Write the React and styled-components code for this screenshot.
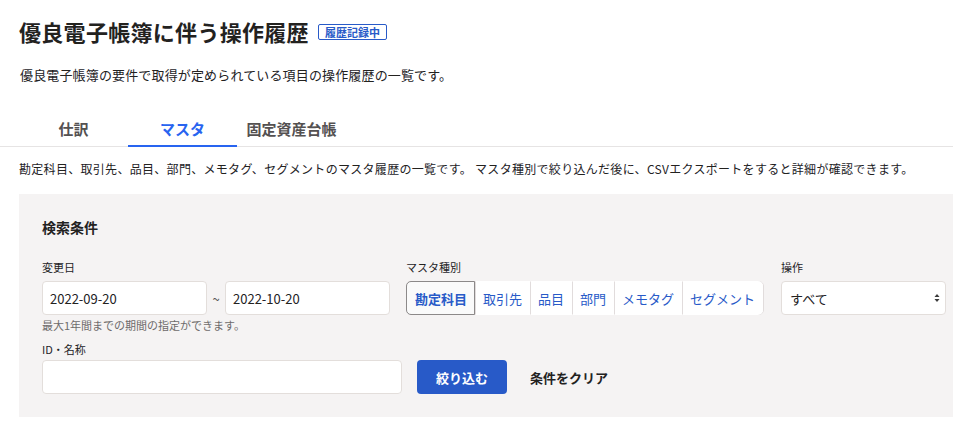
import React, { useState } from "react";
import styled, { createGlobalStyle } from "styled-components";

const colors = {
  text: "#23221f",
  sub: "#6e6b6b",
  blue: "#285ac8",
  tabBlue: "#2864f0",
  border: "#e1dcdc",
  panel: "#f5f3f3",
  line: "#e6e4e4",
};

const GlobalStyle = createGlobalStyle`
  html, body {
    margin: 0;
    padding: 0;
    background: #fff;
    color: ${colors.text};
    font-family: "Noto Sans CJK JP", "Noto Sans", "Liberation Sans", sans-serif;
  }
  * { box-sizing: border-box; }
`;

const masterTypes = ["勘定科目", "取引先", "品目", "部門", "メモタグ", "セグメント"];
const tabs = ["仕訳", "マスタ", "固定資産台帳"];

const App = () => {
  const [activeTab, setActiveTab] = useState(1);
  const [master, setMaster] = useState(0);

  return (
    <Page>
      <GlobalStyle />
      <Header>
        <TitleRow>
          <Title>優良電子帳簿に伴う操作履歴</Title>
          <Badge>履歴記録中</Badge>
        </TitleRow>
        <Lead>優良電子帳簿の要件で取得が定められている項目の操作履歴の一覧です。</Lead>
      </Header>

      <TabBar>
        {tabs.map((t, i) => (
          <Tab key={t} $active={i === activeTab} onClick={() => setActiveTab(i)}>
            {t}
          </Tab>
        ))}
      </TabBar>

      <SectionNote>
        勘定科目、取引先、品目、部門、メモタグ、セグメントのマスタ履歴の一覧です。 マスタ種別で絞り込んだ後に、CSVエクスポートをすると詳細が確認できます。
      </SectionNote>

      <Panel>
        <PanelTitle>検索条件</PanelTitle>
        <FieldRow>
          <Field>
            <Label>変更日</Label>
            <DateRange>
              <DateInput defaultValue="2022-09-20" />
              <Tilde>~</Tilde>
              <DateInput defaultValue="2022-10-20" />
            </DateRange>
            <Hint>最大1年間までの期間の指定ができます。</Hint>
          </Field>
          <Field $gap={17}>
            <Label>マスタ種別</Label>
            <Segments>
              {masterTypes.map((m, i) => (
                <Segment key={m} $active={i === master} onClick={() => setMaster(i)}>
                  {m}
                </Segment>
              ))}
            </Segments>
          </Field>
          <Field>
            <Label>操作</Label>
            <SelectBox>
              <span>すべて</span>
              <svg width="6" height="10" viewBox="0 0 6 10">
                <path d="M3 1 L5.5 4 H0.5 Z" fill="#3a3a3a" />
                <path d="M3 9 L5.5 6 H0.5 Z" fill="#3a3a3a" />
              </svg>
            </SelectBox>
          </Field>
        </FieldRow>
        <Label $top={8} $gap={3}>ID・名称</Label>
        <ActionRow>
          <TextInput />
          <PrimaryButton>絞り込む</PrimaryButton>
          <TextButton>条件をクリア</TextButton>
        </ActionRow>
      </Panel>
    </Page>
  );
};

const Page = styled.div`
  width: 953px;
  overflow: hidden;
`;

const Header = styled.div`
  padding: 15px 0 0 19px;
`;

const TitleRow = styled.div`
  display: flex;
  align-items: center;
`;

const Title = styled.h1`
  margin: 0;
  font-size: 22px;
  line-height: 33px;
  font-weight: bold;
  letter-spacing: 0.3px;
`;

const Badge = styled.span`
  margin-left: 9px;
  margin-top: 1px;
  height: 16px;
  padding: 0 6px;
  display: inline-flex;
  align-items: center;
  border: 1px solid ${colors.blue};
  border-radius: 2px;
  color: ${colors.blue};
  font-size: 11px;
  font-weight: bold;
  line-height: 1;
`;

const Lead = styled.p`
  margin: 17px 0 0 1px;
  font-size: 13px;
  line-height: 20px;
  letter-spacing: 0.15px;
`;

const TabBar = styled.div`
  display: flex;
  margin-top: 28px;
  padding-left: 19px;
  border-bottom: 1px solid ${colors.line};
`;

const Tab = styled.div`
  width: 109px;
  height: 34px;
  display: flex;
  align-items: center;
  justify-content: center;
  padding-bottom: 2px;
  font-size: 15px;
  font-weight: bold;
  color: ${(p) => (p.$active ? colors.tabBlue : "#545151")};
  border-bottom: 2px solid ${(p) => (p.$active ? colors.tabBlue : "transparent")};
  margin-bottom: -1px;
  cursor: pointer;
`;

const SectionNote = styled.p`
  margin: 13px 0 0 19px;
  font-size: 12px;
  line-height: 18px;
  letter-spacing: 0.3px;
  white-space: nowrap;
`;

const Panel = styled.div`
  margin: 16px 0 0 19px;
  padding: 21px 23px 23px;
  background: ${colors.panel};
`;

const PanelTitle = styled.h2`
  margin: 0 0 20px;
  font-size: 14px;
  line-height: 24px;
  font-weight: bold;
`;

const FieldRow = styled.div`
  display: flex;
  align-items: flex-start;
`;

const Field = styled.div`
  display: flex;
  flex-direction: column;
  flex-shrink: 0;
  margin-right: ${(p) => p.$gap || 16}px;
  &:last-child {
    margin-right: 0;
  }
`;

const Label = styled.div`
  font-size: 11px;
  line-height: 16px;
  margin-top: ${(p) => p.$top || 0}px;
  margin-bottom: ${(p) => (p.$gap != null ? p.$gap : 6)}px;
`;

const DateRange = styled.div`
  display: flex;
  align-items: center;
`;

const inputBase = `
  height: 34px;
  border: 1px solid #e3dedb;
  border-radius: 4px;
  background: #fff;
  font-family: inherit;
  font-size: 13px;
  color: #23221f;
  padding: 0 7px;
  outline: none;
`;

const DateInput = styled.input`
  ${inputBase}
  width: 165px;
`;

const Tilde = styled.span`
  width: 18px;
  text-align: center;
  font-size: 13px;
  color: #555;
`;

const Hint = styled.div`
  margin-top: 2px;
  font-size: 11px;
  line-height: 16px;
  color: ${colors.sub};
`;

const Segments = styled.div`
  display: flex;
  height: 34px;
  background: #fff;
  border: 1px solid ${colors.border};
  border-radius: 5px;
  white-space: nowrap;
`;

const Segment = styled.div`
  display: flex;
  align-items: center;
  flex-shrink: 0;
  padding: 0 7px;
  margin: -1px 0;
  font-size: 13px;
  color: ${colors.blue};
  font-weight: ${(p) => (p.$active ? "bold" : "normal")};
  border: 1px solid ${(p) => (p.$active ? "#8c8989" : "transparent")};
  border-left: 1px solid ${(p) => (p.$active ? "#8c8989" : colors.border)};
  border-radius: ${(p) => (p.$active ? "5px 0 0 5px" : "0")};
  background: ${(p) => (p.$active ? "#fafafa" : "#fff")};
  cursor: pointer;
  &:first-child {
    margin-left: -1px;
    padding: 0 7px 0 8px;
  }
  &:last-child {
    border-radius: 0 5px 5px 0;
  }
`;

const SelectBox = styled.div`
  ${inputBase}
  width: 165px;
  display: flex;
  align-items: center;
  justify-content: space-between;
  padding: 0 5px 0 8px;
  font-size: 13px;
`;

const ActionRow = styled.div`
  display: flex;
  align-items: center;
`;

const TextInput = styled.input`
  ${inputBase}
  width: 360px;
`;

const PrimaryButton = styled.button`
  margin-left: 15px;
  width: 90px;
  height: 34px;
  border: none;
  border-radius: 4px;
  background: ${colors.blue};
  color: #fff;
  font-family: inherit;
  font-size: 13px;
  font-weight: bold;
  cursor: pointer;
`;

const TextButton = styled.button`
  margin-left: 17px;
  border: none;
  background: none;
  font-family: inherit;
  font-size: 13px;
  font-weight: bold;
  color: ${colors.text};
  padding: 0 6px;
  cursor: pointer;
`;

export default App;
